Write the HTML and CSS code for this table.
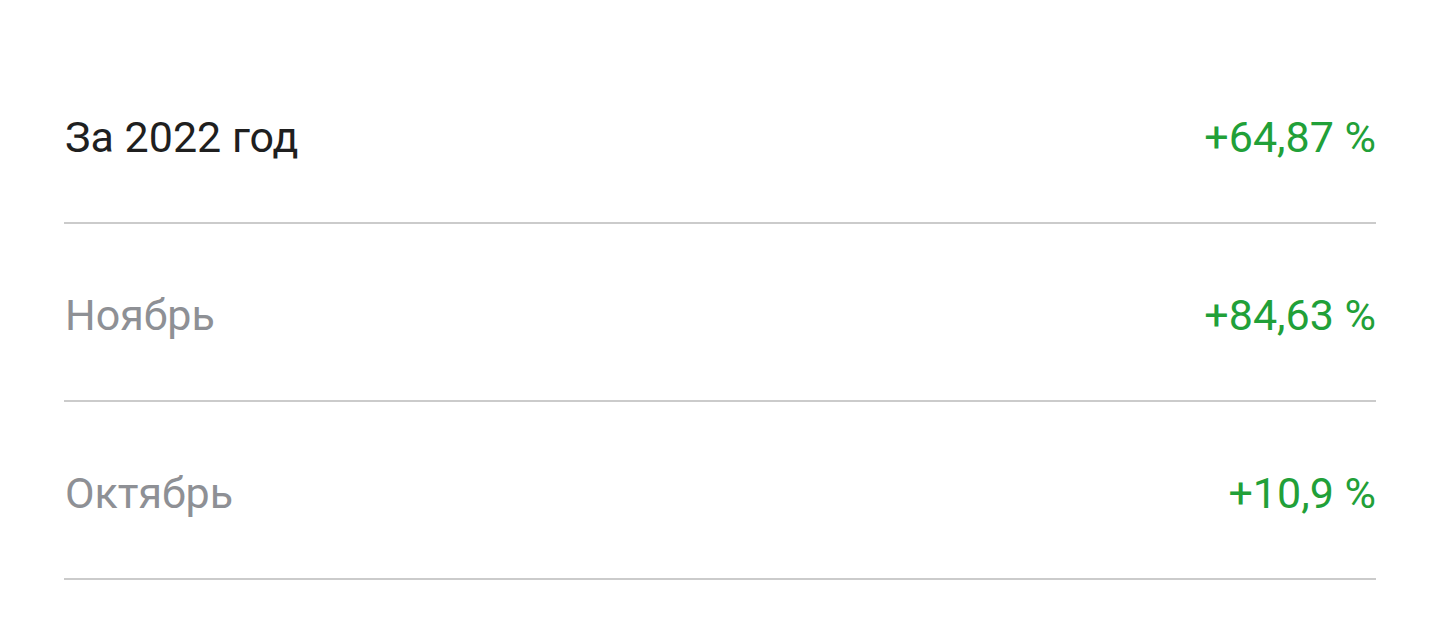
FILE: index.html
```html
<!DOCTYPE html>
<html lang="ru">
<head>
  <meta charset="UTF-8" />
  <meta name="viewport" content="width=device-width, initial-scale=1.0"/>
  <title>Доходность</title>
  <link rel="stylesheet" href="styles.css">
</head>
<body>
  <div class="list">
    <div class="row">
      <span class="label main">За 2022 год</span>
      <span class="value">+64,87 %</span>
    </div>
    <div class="row">
      <span class="label">Ноябрь</span>
      <span class="value">+84,63 %</span>
    </div>
    <div class="row">
      <span class="label">Октябрь</span>
      <span class="value">+10,9 %</span>
    </div>
  </div>
</body>
</html>
```

FILE: styles.css
```css
* {
  box-sizing: border-box;
}

body {
  margin: 0;
  font-family: Roboto, 'Noto Sans', sans-serif;
  background: #fff;
}

.list {
  padding: 46px 64px 0 64px;
}

.row {
  display: flex;
  align-items: center;
  justify-content: space-between;
  height: 178px;
  padding-top: 6px;
  border-bottom: 2px solid #cbcbcb;
  font-size: 43px;
}

.label {
  color: #8e9095;
  padding-left: 1px;
}

.label.main {
  color: #1f1f1f;
}

.value {
  color: #21a038;
}
```
